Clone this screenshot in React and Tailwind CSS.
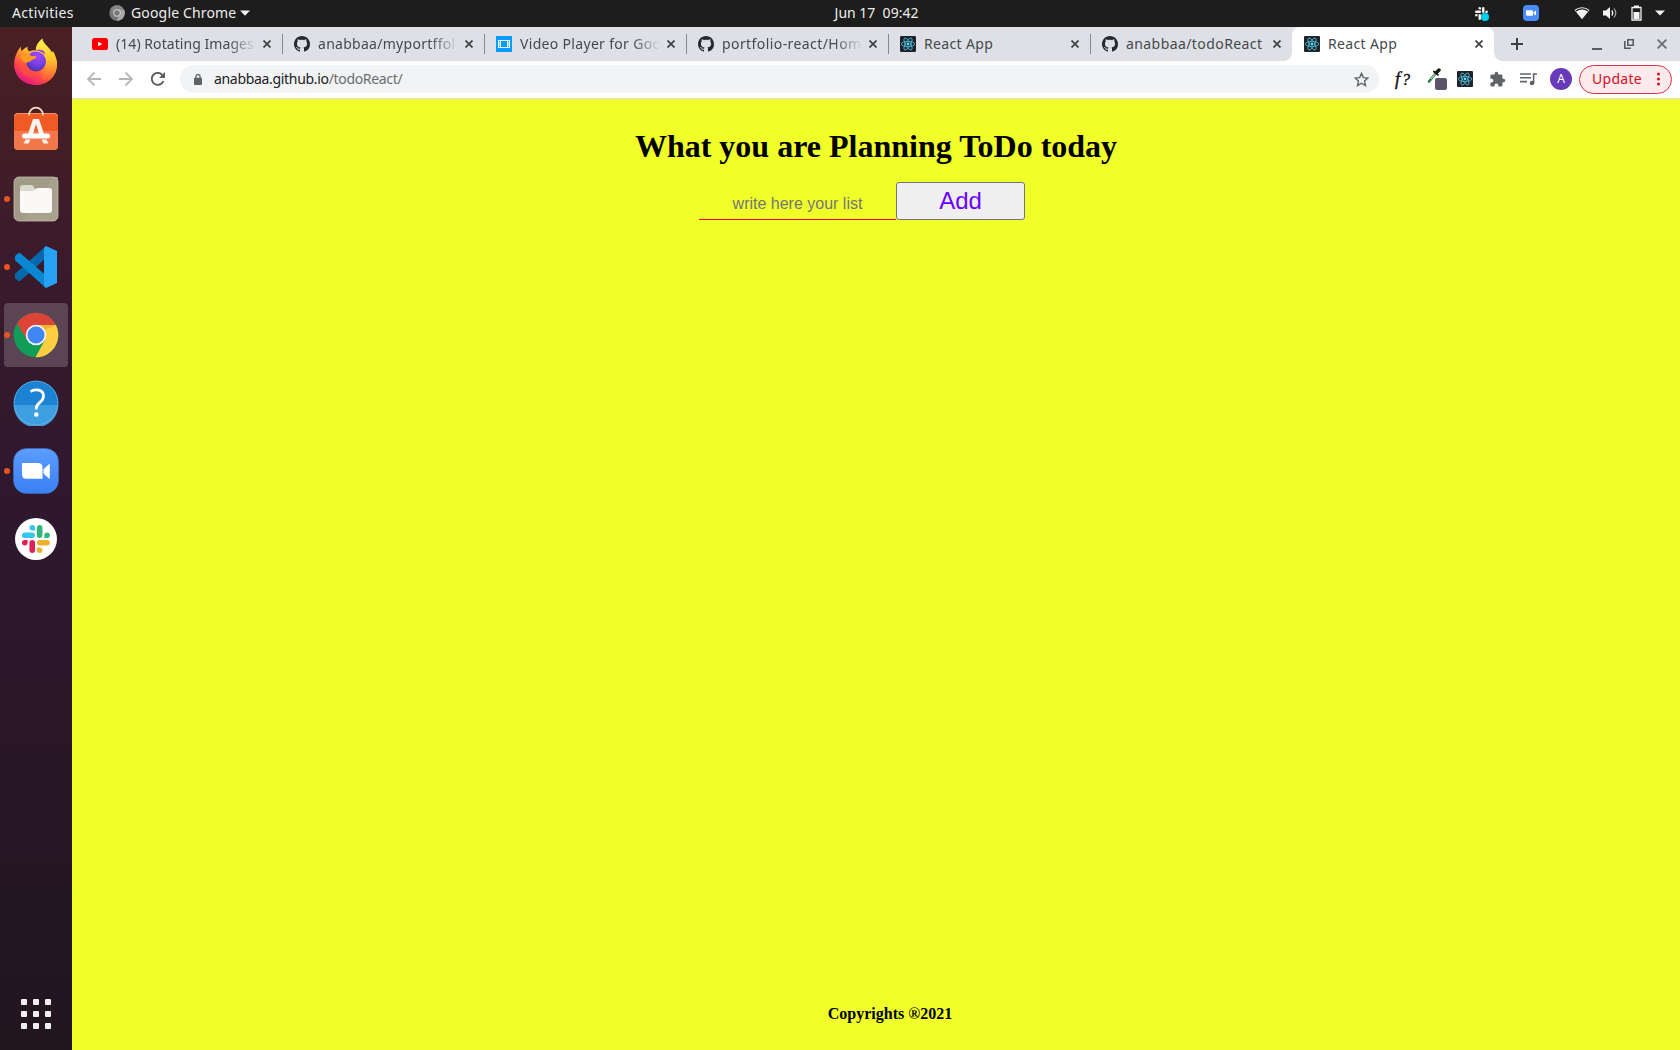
import React from "react";

const UI = "font-['Noto_Sans','Open_Sans',sans-serif]";

function YouTube() {
  return (
    <svg width="16" height="16" viewBox="0 0 16 16">
      <rect y="2" width="16" height="12" rx="2.6" fill="#f00" />
      <path d="M6.2 5.8v4.4L10.2 8z" fill="#fff" />
    </svg>
  );
}

function GitHub() {
  return (
    <svg width="16" height="16" viewBox="0 0 16 16" fill="#24292e">
      <path d="M8 0C3.58 0 0 3.58 0 8c0 3.54 2.29 6.53 5.47 7.59.4.07.55-.17.55-.38 0-.19-.01-.82-.01-1.49-2.01.37-2.53-.49-2.69-.94-.09-.23-.48-.94-.82-1.13-.28-.15-.68-.52-.01-.53.63-.01 1.08.58 1.23.82.72 1.21 1.87.87 2.33.66.07-.52.28-.87.51-1.07-1.78-.2-3.64-.89-3.64-3.95 0-.87.31-1.59.82-2.15-.08-.2-.36-1.02.08-2.12 0 0 .67-.21 2.2.82.64-.18 1.32-.27 2-.27s1.36.09 2 .27c1.53-1.04 2.2-.82 2.2-.82.44 1.1.16 1.92.08 2.12.51.56.82 1.27.82 2.15 0 3.07-1.87 3.75-3.65 3.95.29.25.54.73.54 1.48 0 1.07-.01 1.93-.01 2.2 0 .21.15.46.55.38A8.01 8.01 0 0 0 16 8c0-4.42-3.58-8-8-8z" />
    </svg>
  );
}

function Film() {
  return (
    <svg width="16" height="16" viewBox="0 0 16 16">
      <rect width="16" height="16" fill="#0a9cf5" />
      <path d="M2 4h12v8H2z" fill="#e8f6ff" />
      <path d="M5 5h6v6H5zM3 5h1v1.200H3zM3 7.400h1v1.200H3zM3 9.800h1V11H3zM12 5h1v1.200h-1zM12 7.400h1v1.200h-1zM12 9.800h1V11h-1z" fill="#0a9cf5" />
    </svg>
  );
}

function ReactLogo() {
  return (
    <svg width="16" height="16" viewBox="0 0 16 16">
      <rect width="16" height="16" rx="1" fill="#20232a" />
      <g fill="none" stroke="#4fc3e0" strokeWidth=".8">
        <ellipse cx="8" cy="8" rx="6.7" ry="2.6" />
        <ellipse cx="8" cy="8" rx="6.7" ry="2.6" transform="rotate(60 8 8)" />
        <ellipse cx="8" cy="8" rx="6.7" ry="2.6" transform="rotate(120 8 8)" />
      </g>
      <circle cx="8" cy="8" r="1.4" fill="#61dafb" />
    </svg>
  );
}

function Cross({ size = 8, color = "#3c4043", width = 1.7 }) {
  return (
    <svg width={size} height={size} viewBox="0 0 8 8" stroke={color} strokeWidth={width}>
      <path d="M.5.5l7 7M7.5.5l-7 7" />
    </svg>
  );
}

const tabs = [
  { icon: YouTube, title: "(14) Rotating Images", track: "tracking-[0.06px]", fade: true },
  { icon: GitHub, title: "anabbaa/myportffol", track: "tracking-[0.28px]", fade: true },
  { icon: Film, title: "Video Player for Goo", track: "tracking-[0.32px]", fade: true },
  { icon: GitHub, title: "portfolio-react/Hom", track: "tracking-[0.42px]", fade: true },
  { icon: ReactLogo, title: "React App", track: "tracking-[0.35px]" },
  { icon: GitHub, title: "anabbaa/todoReact", track: "tracking-[0.42px]" },
  { icon: ReactLogo, title: "React App", track: "tracking-[0.35px]", active: true },
];

function Tab({ icon: Icon, title, track, fade, active, divider }) {
  return (
    <div className={`relative flex h-[34px] w-[202px] shrink-0 items-center pl-3 ${active ? "rounded-t-lg bg-white" : ""}`}>
      {active && (
        <>
          <span className="absolute bottom-0 -left-2 size-2 bg-[radial-gradient(circle_at_0_0,transparent_7.5px,white_8px)]" />
          <span className="absolute -right-2 bottom-0 size-2 bg-[radial-gradient(circle_at_100%_0,transparent_7.5px,white_8px)]" />
        </>
      )}
      <Icon />
      <div
        className={`ml-2 w-[139px] text-[14px] leading-[20px] whitespace-nowrap text-[#45494d] ${track} ${
          fade ? "[mask-image:linear-gradient(to_right,black_112px,transparent_141px)]" : ""
        }`}
      >
        {title}
      </div>
      <span className="ml-2">
        <Cross />
      </span>
      {divider && <span className="absolute top-[7px] right-[-1px] h-5 w-px bg-[#85888d]" />}
    </div>
  );
}

function SlackMark({ size, mono }) {
  const c = mono ? ["#f2f2f2", "#f2f2f2", "#f2f2f2", "#f2f2f2"] : ["#36c5f0", "#2eb67d", "#ecb22e", "#e01e5a"];
  return (
    <svg width={size} height={size} viewBox="0 0 54 54">
      <path fill={c[0]} d="M19.71 0a5.38 5.38 0 0 0 0 10.77h5.38V5.38A5.38 5.38 0 0 0 19.71 0m0 14.36H5.38a5.38 5.38 0 0 0 0 10.77h14.33a5.38 5.38 0 0 0 0-10.77" />
      <path fill={c[1]} d="M53.76 19.75a5.38 5.38 0 0 0-10.75 0v5.38h5.37a5.38 5.38 0 0 0 5.38-5.38m-14.33 0V5.38a5.38 5.38 0 0 0-10.75 0v14.37a5.38 5.38 0 0 0 10.75 0" />
      <path fill={c[2]} d="M34.05 54a5.38 5.38 0 0 0 0-10.77h-5.37v5.38A5.38 5.38 0 0 0 34.05 54m0-14.36h14.33a5.38 5.38 0 0 0 0-10.77H34.05a5.38 5.38 0 0 0 0 10.77" />
      <path fill={c[3]} d="M0 34.25a5.38 5.38 0 0 0 10.75 0v-5.38H5.38A5.38 5.38 0 0 0 0 34.25m14.34 0v14.37a5.38 5.38 0 0 0 10.75 0V34.25a5.38 5.38 0 0 0-10.75 0" />
    </svg>
  );
}

function TopBar() {
  return (
    <header className="grid h-[27px] grid-cols-[1fr_auto_1fr] items-center bg-[#1d1d1d] pb-px text-[14px] leading-[20px] text-[#eeeeec]">
      <div className="flex items-center pl-3">
        <span className="w-[97px] tracking-[0.35px]">Activities</span>
        <svg width="16" height="16" viewBox="0 0 16 16">
          <circle cx="8" cy="8" r="7.7" fill="#777" />
          <path d="M8 4.500h7A7.700 7.700 0 0 1 7.600 15.700L11.500 9z" fill="#a9a9a9" />
          <path d="M1.500 4A7.700 7.700 0 0 1 15 4.500H8L5 9z" fill="#858585" />
          <circle cx="8" cy="8" r="3.700" fill="#d0d0d0" />
          <circle cx="8" cy="8" r="2.700" fill="#777" />
        </svg>
        <span className="ml-1.5 w-[109px] tracking-[0.16px] whitespace-nowrap">Google Chrome</span>
        <svg width="10" height="6" viewBox="0 0 10 6" fill="#f2f2f2"><path d="M0 .5h10L5 5.7z" /></svg>
      </div>
      <div className="pl-[73px] tracking-[0px] whitespace-pre">Jun 17  09:42</div>
      <div className="flex items-center justify-end pr-[15px]">
        <span className="relative mr-[34px] flex size-4 items-center justify-center">
          <SlackMark size={13} mono />
          <span className="absolute right-0 bottom-0 size-2 rounded-full bg-[#00d0f5]" />
        </span>
        <svg className="mr-[35px]" width="16" height="16" viewBox="0 0 16 16">
          <rect width="16" height="16" rx="4" fill="#4a8cff" />
          <path d="M3 5.2h5.600q1.400 0 1.400 1.400v4.200H4.400Q3 10.800 3 9.400zM10.700 7.200L13 5.400v5.200L10.700 8.900z" fill="#fff" />
        </svg>
        <svg className="mr-3" width="16" height="14" viewBox="0 0 16 14">
          <path d="M.5 4A11.500 11.500 0 0 1 15.500 4L8 13.300z" fill="#f2f2f2" />
          <path d="M2 5.100A9.500 9.500 0 0 1 14 5.100" fill="none" stroke="#1d1d1d" strokeWidth="1.300" />
        </svg>
        <svg className="mr-[13px]" width="16" height="14" viewBox="0 0 16 14">
          <path d="M1 4.500h3L8 1v12L4 9.500H1z" fill="#f2f2f2" />
          <path d="M9.800 4.500q1.900 2.500 0 5" fill="none" stroke="#f2f2f2" strokeWidth="1.300" />
          <path d="M12 2.500q3.600 4.500 0 9" fill="none" stroke="#aaa" strokeWidth="1.200" />
        </svg>
        <svg className="mr-[13px]" width="11" height="16" viewBox="0 0 11 16">
          <path d="M1 2.500h9v12.500H1z" fill="none" stroke="#f2f2f2" strokeWidth="1.300" />
          <path d="M3 .4h5v2H3zM2.500 7h6v7h-6z" fill="#f2f2f2" />
        </svg>
        <svg width="10" height="6" viewBox="0 0 10 6" fill="#f2f2f2"><path d="M0 .5h10L5 5.500z" /></svg>
      </div>
    </header>
  );
}

function Firefox() {
  return (
    <svg width="46" height="48" viewBox="0 0 46 48">
      <defs>
        <linearGradient id="ffBody" x1=".85" y1=".1" x2=".25" y2="1">
          <stop offset="0" stopColor="#fff44f" />
          <stop offset=".35" stopColor="#ffa62b" />
          <stop offset=".65" stopColor="#ff4b45" />
          <stop offset="1" stopColor="#e3108b" />
        </linearGradient>
        <radialGradient id="ffGlobe" cx=".6" cy=".2" r=".9">
          <stop offset="0" stopColor="#a846ff" />
          <stop offset=".5" stopColor="#7542e5" />
          <stop offset="1" stopColor="#4b2a9b" />
        </radialGradient>
        <linearGradient id="ffTail" x1="0" y1="0" x2="0" y2="1">
          <stop offset="0" stopColor="#fff44f" />
          <stop offset=".5" stopColor="#ffc52b" />
          <stop offset="1" stopColor="#ff5a3a" />
        </linearGradient>
      </defs>
      <path fill="url(#ffBody)" d="M2.500 18C4 14 5.500 11 8 8.500c-.3 2.500.2 3.500.6 4.500 1.600-1.300 3-3 6-4.500-.5 2.500.5 4 1.500 5 3-1.800 9-1.600 12 0 6-3 12 1 15 7C47 36 36 47 23 47 9 47-1 36 1.500 22z" />
      <path fill="url(#ffTail)" d="M23 13C22 8 26 3 29.500.5c.5 6 6.500 7.500 9.500 14l1-1.500c5 8 6 20-2 26-3 3-8 3-10 2 7-6 8-20-5-28z" />
      <circle cx="23" cy="23.500" r="10" fill="url(#ffGlobe)" />
      <path fill="#9140e8" d="M17 15c4-4 11-3 15 2l-1-4q-7-4-14 2" />
      <path fill="#ff9b25" d="M8 17c5-2.500 9-2 10 1 2 0 5-.2 5.700.8-.8 2.200-4.700 2.700-6 4.200-1.500 1.700-3.700.2-4.500 2.500-3-1-5.200-4-5.200-8.500" />
      <path fill="#ff523e" opacity=".65" d="M13 25c1 8 9 11 15 7-3 8-17 10-21-1-1-4 1-8 1-8z" />
    </svg>
  );
}

function Software() {
  return (
    <svg width="46" height="46" viewBox="0 0 46 46">
      <rect x="1" y="8" width="44" height="37" rx="4" fill="#f05a24" />
      <path d="M1 26h44v15q0 4-4 4H5q-4 0-4-4z" fill="#f2774a" />
      <path d="M1.500 11q.5-2.500 3.500-2.500h36q3 0 3.500 2.500" fill="none" stroke="#f9a176" strokeWidth=".8" />
      <path d="M16 10.500C16 0 30 0 30 10.500" fill="none" stroke="#f8dcb6" strokeWidth="1.800" />
      <path d="M20 14h6l5 15h-5L23 19 20 29h-5z" fill="#fff4ed" />
      <rect x="9" y="28.500" width="28" height="5" rx="2.500" fill="#fff" />
      <path d="M12.500 34.500h5l-2 4h-5zM28.500 34.500h5l2 4h-5z" fill="#fff4ed" />
    </svg>
  );
}

function Files() {
  return (
    <svg width="46" height="46" viewBox="0 0 46 46">
      <rect x="1" y="1" width="44" height="44" rx="5" fill="#a29b88" />
      <path d="M45 1v38q0 6-6 6H10L40 1z" fill="#aaa390" opacity=".8" />
      <rect x="1" y="1" width="44" height="44" rx="5" fill="none" stroke="#c2bca9" strokeWidth=".8" />
      <path d="M7 12q0-3 3-3h8q2 0 3 2l1 2h14q3 0 3 3v5H7z" fill="#dcd9d0" />
      <path d="M7 15h12q2 0 3-1.500t3-1.500h11q3 0 3 3v19q0 3-3 3H10q-3 0-3-3z" fill="#faf9f7" />
    </svg>
  );
}

function Code() {
  return (
    <svg width="44" height="44" viewBox="0 0 44 44">
      <path d="M1 29.500v3.500l3.500 3 2-.3L32 13V1L1.500 28.300z" fill="#0669ad" />
      <path d="M1 14.500V11l3.500-3 2 .3L32 30.500V43L1.500 15.700z" fill="#0a87d3" />
      <path d="M32 1l11 5v32l-11 5q-2-1-2-3V4q0-2 2-3" fill="#25a3f2" />
    </svg>
  );
}

function Chrome() {
  return (
    <svg width="46" height="46" viewBox="0 0 46 46">
      <circle cx="23" cy="23" r="22.300" fill="#109d58" />
      <path d="M23 13H42.900A22.300 22.300 0 0 1 22.500 45.300L32 28z" fill="#ffcd40" />
      <path d="M4 11.500A22.300 22.300 0 0 1 42.900 13H23L14 28z" fill="#db4437" />
      <path d="M27 13h15.900L32.500 17.500z" fill="#d99a23" opacity=".45" />
      <circle cx="23" cy="23" r="10.300" fill="#f1f1f1" />
      <circle cx="23" cy="23" r="8.500" fill="#4285f4" />
    </svg>
  );
}

function Help() {
  return (
    <svg width="46" height="46" viewBox="0 0 46 46">
      <circle cx="23" cy="23" r="22.300" fill="#1c83d4" />
      <path d="M.7 25h44.600a22.300 22.300 0 0 1-44.600 0" fill="#3d9fdf" />
      <circle cx="23" cy="23" r="21.900" fill="none" stroke="#68b4e6" strokeWidth=".8" />
      <path d="M17.500 11.500c5-3 13-2 13 4.500 0 6.500-7.200 6.500-7.200 12v1.500" fill="none" stroke="#fff" strokeWidth="2.800" />
      <circle cx="23.300" cy="34.500" r="2.300" fill="#fff" />
    </svg>
  );
}

function Zoom() {
  return (
    <svg width="46" height="46" viewBox="0 0 46 46">
      <defs>
        <linearGradient id="zoomBg" x1="0" y1="0" x2="0" y2="1">
          <stop offset="0" stopColor="#5b9dff" />
          <stop offset="1" stopColor="#3b7ff5" />
        </linearGradient>
      </defs>
      <rect x=".5" y=".5" width="45" height="45" rx="13" fill="url(#zoomBg)" stroke="#3d6fba" strokeWidth=".6" />
      <path d="M9 15h16q4.500 0 4.500 4.500v11.200H13.500Q9 30.700 9 26.200zM30.500 21.200l5.500-5q.8-.5.800.4v13.500q0 .9-.8.400l-5.500-5z" fill="#fff" />
    </svg>
  );
}

function Slack() {
  return (
    <span className="flex size-[42px] items-center justify-center rounded-full bg-white">
      <SlackMark size={28} />
    </span>
  );
}

const dock = [
  { icon: Firefox, shift: "pb-0.5" },
  { icon: Software, shift: "pb-1.5" },
  { icon: Files, running: true },
  { icon: Code, running: true },
  { icon: Chrome, running: true, active: true },
  { icon: Help, shift: "pb-px" },
  { icon: Zoom, running: true },
  { icon: Slack },
];

function Dock() {
  return (
    <aside className="flex w-[72px] shrink-0 flex-col items-center justify-between bg-[linear-gradient(to_bottom,#4a2023_0%,#3b1b2b_22%,#30182e_42%,#2a172a_65%,#21151e_100%)] pt-1 pb-[21px]">
      <div className="flex flex-col gap-1">
        {dock.map(({ icon: Icon, shift, running, active }, i) => (
          <div key={i} className={`relative flex size-16 items-center justify-center rounded-[4px] ${shift ?? ""} ${active ? "bg-[#5b4453]" : ""}`}>
            {running && <span className="absolute top-[29px] left-0 size-1.5 rounded-full bg-[#e95420]" />}
            <Icon />
          </div>
        ))}
      </div>
      <div className="grid grid-cols-3 gap-1.5">
        {Array.from({ length: 9 }, (_, i) => (
          <span key={i} className="size-1.5 rounded-[1px] bg-[#f0eff0]" />
        ))}
      </div>
    </aside>
  );
}

function Toolbar() {
  return (
    <div className="flex h-[38px] items-center border-b border-[#d9dbe0] bg-white pr-[7px] pb-px pl-[15px]">
      <svg width="14" height="14" viewBox="0 0 14 14" fill="none" stroke="#b4b6b9" strokeWidth="1.800"><path d="M14 7H1M7.500.500L1 7l6.500 6.500" /></svg>
      <svg className="ml-[18px]" width="14" height="14" viewBox="0 0 14 14" fill="none" stroke="#b4b6b9" strokeWidth="1.800"><path d="M0 7h13M6.500.500L13 7l-6.500 6.500" /></svg>
      <svg className="ml-[18px]" width="14" height="14" viewBox="0 0 14 14"><path d="M12.400 9A6 6 0 1 1 11.300 2.900L13 4.600" fill="none" stroke="#5a5d61" strokeWidth="1.900" /><path d="M14 0v6H8z" fill="#5a5d61" /></svg>
      <div className="ml-[15px] flex h-7 w-[1199px] items-center rounded-full bg-[#f1f3f4] pr-[10px] pl-[14px]">
        <svg width="8" height="11" viewBox="0 0 8 11"><path d="M1.900 5V2.700a2.100 2.100 0 0 1 4.200 0V5" fill="none" stroke="#5f6368" strokeWidth="1.300" /><rect y="3.800" width="8" height="7.200" rx=".8" fill="#5f6368" /></svg>
        <span className="ml-3 flex-1 text-[14px] leading-5 tracking-[-0.32px] text-[#6a6e72]"><span className="text-[#202124]">anabbaa.github.io</span>/todoReact/</span>
        <svg width="15" height="15" viewBox="0 0 16 16" fill="none" stroke="#5f6368" strokeWidth="1.500"><path d="M8 1.500l2 4.500 4.900.4-3.700 3.300 1.100 4.800L8 12l-4.300 2.500 1.100-4.800L1.100 6.400 6 6z" /></svg>
      </div>
      <span className="ml-4 w-4 font-['Liberation_Serif',serif] text-[16px] leading-5 whitespace-nowrap text-[#111] italic [-webkit-text-stroke:0.4px_#111]"><span className="mr-[2px] text-[18px]">f</span>?</span>
      <svg className="ml-4" width="20" height="22" viewBox="0 0 20 22">
        <path d="M2 13.500L9.500 4.500" stroke="#2d7a44" strokeWidth="2.600" strokeLinecap="round" />
        <path d="M4 11L9.500 4.500" stroke="#e6ede8" strokeWidth="1" />
        <path d="M9.500 4.500L12 2" stroke="#151515" strokeWidth="3.400" strokeLinecap="round" />
        <path d="M6.800 3.500l4.200 3.400" stroke="#151515" strokeWidth="1.700" strokeLinecap="round" />
        <rect x="8" y="10" width="12" height="12" rx="2" fill="#5a5366" />
      </svg>
      <span className="ml-[10px]"><ReactLogo /></span>
      <svg className="ml-4" width="17" height="17" viewBox="0 0 24 24" fill="#5f6368"><path d="M20.500 11H19V7c0-1.100-.9-2-2-2h-4V3.500a2.500 2.500 0 0 0-5 0V5H4c-1.100 0-2 .9-2 2v3.800h1.500a2.700 2.700 0 0 1 0 5.400H2V20c0 1.100.9 2 2 2h3.800v-1.500a2.700 2.700 0 0 1 5.400 0V22H17c1.100 0 2-.9 2-2v-4h1.500a2.500 2.500 0 0 0 0-5z" /></svg>
      <svg className="ml-[14px]" width="17" height="14" viewBox="0 0 17 14"><path d="M0 2h11M0 5.800h11M0 9.600h7M17 2h-3.400v9" fill="none" stroke="#5f6368" strokeWidth="1.600" /><circle cx="12" cy="11" r="2.300" fill="#5f6368" /></svg>
      <span className="ml-[13px] flex size-[22px] items-center justify-center rounded-full bg-[#673ab7] text-[12px] text-white">A</span>
      <div className="ml-[7px] flex h-[29px] w-[93px] items-center justify-between rounded-full border border-[#d93040] bg-[#fceaec] pr-[11px] pl-3 text-[14px] leading-5 text-[#d6101f]">
        <span className="tracking-[0.3px]">Update</span>
        <svg width="3" height="14" viewBox="0 0 3 14" fill="#d6101f"><circle cx="1.500" cy="2" r="1.500" /><circle cx="1.500" cy="7" r="1.500" /><circle cx="1.500" cy="12" r="1.500" /></svg>
      </div>
    </div>
  );
}

function Browser() {
  return (
    <div className="flex min-w-0 flex-1 flex-col">
      <div className="flex h-[34px] items-center bg-[#dee0e5] pr-[13px] pl-2">
        {tabs.map((t, i) => (
          <Tab key={i} {...t} divider={i < 5} />
        ))}
        <svg className="ml-[17px]" width="12" height="12" viewBox="0 0 12 12" stroke="#3c4043" strokeWidth="2"><path d="M6 0v12M0 6h12" /></svg>
        <div className="ml-auto flex items-center">
          <span className="mt-2.5 h-0.5 w-2.5 bg-[#5a5d61]" />
          <svg className="ml-[22px]" width="10" height="10" viewBox="0 0 10 10" fill="none" stroke="#5a5d61"><path d="M3.800.800h5.400v5.400H3.800z" strokeWidth="1.600" /><path d="M.8 2v7.200H7" strokeWidth="1.600" /></svg>
          <span className="ml-[23px]"><Cross size={10} color="#6a6d71" width={1.5} /></span>
        </div>
      </div>
      <Toolbar />
      <main className="flex flex-1 flex-col items-center justify-between bg-[#f0ff29] pt-[29px] pb-[27px] font-['Liberation_Serif',serif] text-black">
        <div className="flex flex-col items-center">
          <h1 className="text-[32px] leading-[37px] font-bold">What you are Planning ToDo today</h1>
          <div className="mt-[17px] mr-7 flex">
            <input
              className="h-[38px] w-[197px] border-b border-[#ff0000] bg-transparent pt-1.5 text-center font-['Liberation_Sans',sans-serif] text-[16px] outline-none placeholder:text-[#757575]"
              placeholder="write here your list"
            />
            <button className="h-[38px] w-[129px] rounded-[3px] border border-[#767676] bg-[#efefef] font-['Liberation_Sans',sans-serif] text-[24px] leading-[28px] text-[#6a00ff]">
              Add
            </button>
          </div>
        </div>
        <footer className="ml-7 text-[16px] leading-[18px] font-bold">Copyrights ®2021</footer>
      </main>
    </div>
  );
}

export default function App() {
  return (
    <div className={`flex h-screen w-screen flex-col overflow-hidden ${UI}`}>
      <TopBar />
      <div className="flex min-h-0 flex-1">
        <Dock />
        <Browser />
      </div>
    </div>
  );
}
